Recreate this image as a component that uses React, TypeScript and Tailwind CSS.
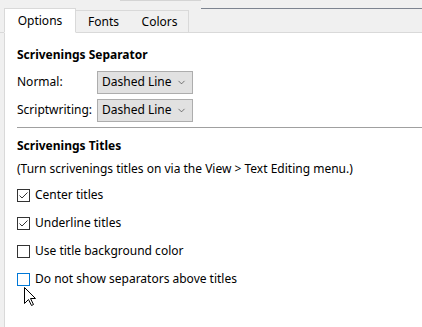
import { ChevronDown } from 'lucide-react';

const font = { fontFamily: '"Noto Sans", "Segoe UI", sans-serif' };

function Dropdown({ value }: { value: string }) {
  return (
    <div className="flex items-center justify-between w-[96px] h-[23px] bg-[#e1e1e1] border border-[#adadad] pl-[4px] pr-[5px]">
      <span>{value}</span>
      <ChevronDown size={11} strokeWidth={1.4} className="text-[#333]" />
    </div>
  );
}

function Checkbox({ label, checked = false, hover = false }: { label: string; checked?: boolean; hover?: boolean }) {
  return (
    <div className="flex items-center h-[28px] gap-[5px]">
      <div
        className={`w-[13px] h-[13px] border bg-white flex items-center justify-center ${hover ? 'border-[#0078d7]' : 'border-[#333333]'}`}
      >
        {checked && (
          <svg width="11" height="11" viewBox="0 0 11 11">
            <path d="M1.5 5.5 L4 8 L9.5 2.5" fill="none" stroke="#333" strokeWidth="1" />
          </svg>
        )}
      </div>
      <span>{label}</span>
    </div>
  );
}

export default function App() {
  return (
    <div className="relative w-[422px] h-[327px] overflow-hidden bg-[#f0f0f0] text-[12px] text-black" style={font}>
      {/* top remnants */}
      <div className="flex h-[9px]">
        <div className="w-[120px]" />
        <div className="w-[81px] h-px bg-[#d4d4d4]" />
        <div className="flex-1 flex flex-col">
          <div className="h-[8px]" />
          <div className="h-px bg-[#7d8490]" />
        </div>
      </div>

      {/* tabs */}
      <div className="flex items-end h-[24px] pl-[4px] border-b border-[#d9d9d9]">
        <div className="w-[72px] h-[25px] -mb-px bg-white border border-[#d9d9d9] border-b-white flex items-center justify-center">
          Options
        </div>
        <div className="flex h-[22px] border border-l-0 border-b-0 border-[#d9d9d9]">
          <div className="w-[55px] flex items-center justify-center">Fonts</div>
          <div className="w-[57px] flex items-center justify-center">Colors</div>
        </div>
      </div>

      {/* panel */}
      <div className="ml-[4px] h-full bg-white border-l border-[#d9d9d9] pl-[12px] pt-[11px]">
        <div className="font-bold h-[22px] flex items-center">Scrivenings Separator</div>
        <div className="flex items-center mt-[4px] h-[24px]">
          <span className="w-[80px]">Normal:</span>
          <Dropdown value="Dashed Line" />
        </div>
        <div className="flex items-center mt-[4px] h-[24px]">
          <span className="w-[80px]">Scriptwriting:</span>
          <Dropdown value="Dashed Line" />
        </div>
        <div className="h-px bg-[#a0a0a0] mt-[5px]" />
        <div className="font-bold h-[22px] flex items-center mt-[7px]">Scrivenings Titles</div>
        <div className="h-[22px] flex items-center mt-[1px]">(Turn scrivenings titles on via the View &gt; Text Editing menu.)</div>
        <div className="mt-[1px]">
          <Checkbox label="Center titles" checked />
          <Checkbox label="Underline titles" checked />
          <Checkbox label="Use title background color" />
          <Checkbox label="Do not show separators above titles" hover />
        </div>
      </div>

      {/* mouse cursor */}
      <svg className="absolute left-[24px] top-[287px]" width="13" height="20" viewBox="0 0 13 20">
        <path d="M0.5 0.5 L0.5 16.5 L4.5 12.5 L7.5 18.5 L9.5 17.5 L6.5 11.5 L11.5 11.5 Z" fill="white" stroke="black" strokeWidth="1" strokeLinejoin="miter" />
      </svg>
    </div>
  );
}
